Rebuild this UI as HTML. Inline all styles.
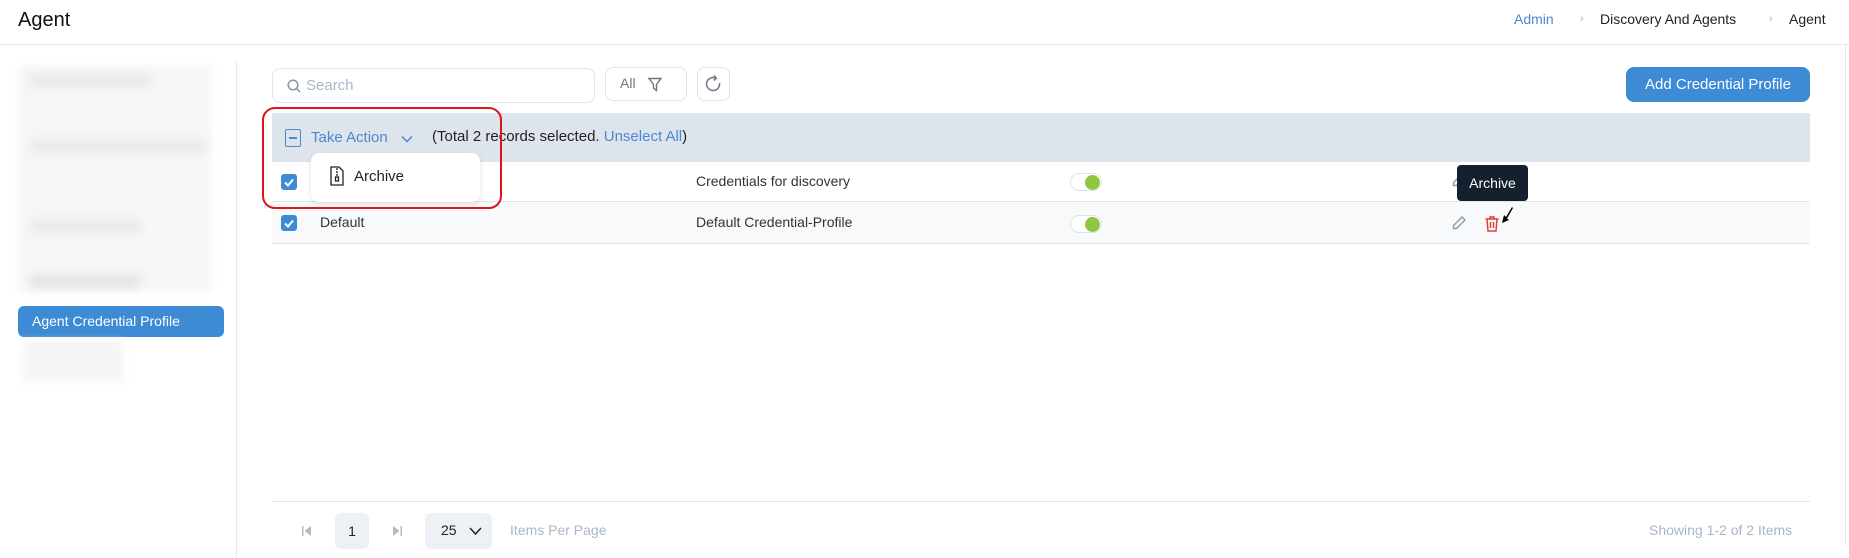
<!DOCTYPE html>
<html><head><meta charset="utf-8"><style>
*{box-sizing:border-box;margin:0;padding:0}
body{width:1849px;height:558px;background:#fff;font-family:"Liberation Sans",sans-serif;position:relative;overflow:hidden;color:#222}
.a{position:absolute}
.t{white-space:nowrap}
</style></head><body>
<div class="a t" style="left:18px;top:9px;font-size:20px;color:#111">Agent</div>
<div class="a t" style="left:1514px;top:11px;font-size:14px;color:#4a88d0">Admin</div>
<div class="a t" style="left:1580px;top:13px;font-size:11px;color:#aaa">›</div>
<div class="a t" style="left:1600px;top:11px;font-size:14px;color:#222">Discovery And Agents</div>
<div class="a t" style="left:1769px;top:13px;font-size:11px;color:#aaa">›</div>
<div class="a t" style="left:1789px;top:11px;font-size:14px;color:#222">Agent</div>
<div class="a" style="left:0;top:44px;width:1849px;height:1px;background:#dfe5ec"></div>

<div class="a" style="left:18px;top:65px;width:194px;height:227px;background:#f6f7f8;filter:blur(3px)"></div>
<div class="a" style="left:30px;top:75px;width:120px;height:12px;background:#e6e7e9;filter:blur(5px)"></div>
<div class="a" style="left:30px;top:140px;width:175px;height:12px;background:#e6e7e9;filter:blur(5px)"></div>
<div class="a" style="left:30px;top:220px;width:110px;height:12px;background:#e6e7e9;filter:blur(5px)"></div>
<div class="a" style="left:30px;top:275px;width:110px;height:12px;background:#e0e1e3;filter:blur(5px)"></div>
<div class="a t" style="left:18px;top:306px;width:206px;height:31px;background:#3d8bd4;border-radius:6px;color:#fff;font-size:14px;padding:7px 0 0 14px">Agent Credential Profile</div>
<div class="a" style="left:23px;top:341px;width:100px;height:40px;background:#f4f5f6;filter:blur(4px)"></div>
<div class="a" style="left:236px;top:62px;width:1px;height:496px;background:#e5e8ec"></div>
<div class="a" style="left:1845px;top:45px;width:1px;height:500px;background:#e5e8ec"></div>

<div class="a" style="left:272px;top:68px;width:323px;height:35px;border:1px solid #dfe4ea;border-radius:8px"></div>
<svg class="a" style="left:287px;top:79px" width="14" height="14" viewBox="0 0 14 14" fill="none" stroke="#8894a2" stroke-width="1.5"><circle cx="6" cy="6" r="4.8"/><path d="M9.5 9.5L13 13"/></svg>
<div class="a t" style="left:306px;top:77px;font-size:15px;color:#a8b6c8">Search</div>
<div class="a" style="left:605px;top:67px;width:82px;height:34px;border:1px solid #dfe4ea;border-radius:8px"></div>
<div class="a t" style="left:620px;top:75px;font-size:14px;color:#6c7684">All</div>
<svg class="a" style="left:648px;top:77px" width="14" height="15" viewBox="0 0 14 15" fill="none" stroke="#6c7684" stroke-width="1.4"><path d="M1 1.5h12L8.5 7.5v6L5.5 11V7.5z"/></svg>
<div class="a" style="left:697px;top:67px;width:33px;height:34px;border:1px solid #dfe4ea;border-radius:8px"></div>
<svg class="a" style="left:704px;top:74px" width="19" height="20" viewBox="0 0 19 20" fill="none" stroke="#6c7684" stroke-width="1.5"><path d="M12 4.2A6.5 6.5 0 1 0 15.5 9"/><path d="M10 1.5l2.3 2.7-2.6 2.2"/></svg>
<div class="a t" style="left:1626px;top:67px;width:184px;height:35px;background:#3d8bd4;border-radius:8px;color:#fff;font-size:15px;text-align:center;line-height:35px">Add Credential Profile</div>

<div class="a" style="left:272px;top:113px;width:1538px;height:49px;background:#dee4ec"></div>
<div class="a" style="left:272px;top:162px;width:1538px;height:40px;background:#fff;border-bottom:1px solid #dfe5ec"></div>
<div class="a" style="left:272px;top:202px;width:1538px;height:42px;background:#f7f9fb;border-bottom:1px solid #dfe5ec"></div>
<div class="a" style="left:285px;top:129px;width:16px;height:18px;border:1.5px solid #4a88d0;border-radius:2px"></div>
<div class="a" style="left:289px;top:137px;width:8px;height:1.5px;background:#4a88d0"></div>
<div class="a t" style="left:311px;top:129px;font-size:15px;color:#4a88d0">Take Action</div>
<svg class="a" style="left:401px;top:135px" width="12" height="8" viewBox="0 0 12 8" fill="none" stroke="#4a88d0" stroke-width="1.5"><path d="M1 1.5l5 5 5-5"/></svg>
<div class="a t" style="left:432px;top:128px;font-size:15px;color:#222">(Total 2 records selected. <span style="color:#4a88d0">Unselect All</span>)</div>

<div class="a" style="left:281px;top:174px;width:16px;height:16px;background:#3d8bd4;border-radius:3px"></div>
<svg class="a" style="left:281px;top:174px" width="16" height="16" viewBox="0 0 16 16" fill="none" stroke="#fff" stroke-width="2"><path d="M4 8.5l3 3 5-6"/></svg>
<div class="a" style="left:281px;top:215px;width:16px;height:16px;background:#3d8bd4;border-radius:3px"></div>
<svg class="a" style="left:281px;top:215px" width="16" height="16" viewBox="0 0 16 16" fill="none" stroke="#fff" stroke-width="2"><path d="M4 8.5l3 3 5-6"/></svg>
<div class="a t" style="left:320px;top:214px;font-size:14px;color:#333">Default</div>
<div class="a t" style="left:696px;top:173px;font-size:14px;color:#333">Credentials for discovery</div>
<div class="a t" style="left:696px;top:214px;font-size:14px;color:#333">Default Credential-Profile</div>
<div class="a" style="left:1070px;top:173px;width:32px;height:18px;border:1px solid #e0e4ea;border-radius:9px;background:#fff"></div>
<div class="a" style="left:1085px;top:175px;width:15px;height:15px;border-radius:50%;background:#8dc63f"></div>
<div class="a" style="left:1070px;top:215px;width:32px;height:18px;border:1px solid #e0e4ea;border-radius:9px;background:#fff"></div>
<div class="a" style="left:1085px;top:217px;width:15px;height:15px;border-radius:50%;background:#8dc63f"></div>

<svg class="a" style="left:1451px;top:172px" width="16" height="16" viewBox="0 0 16 16" fill="none" stroke="#8a98aa" stroke-width="1.4"><path d="M11 2l3 3-8.5 8.5H2.5v-3z"/></svg>
<svg class="a" style="left:1451px;top:215px" width="16" height="16" viewBox="0 0 16 16" fill="none" stroke="#8a98aa" stroke-width="1.4"><path d="M11 2l3 3-8.5 8.5H2.5v-3z"/></svg>
<svg class="a" style="left:1484px;top:215px" width="16" height="17" viewBox="0 0 16 17" fill="none" stroke="#e0403a" stroke-width="1.5"><path d="M1.5 4h13M6 4V2h4v2M3 4l1 12h8l1-12M6.5 7v6M9.5 7v6"/></svg>
<svg class="a" style="left:1500px;top:206px" width="16" height="18" viewBox="0 0 16 18"><path d="M12 1L6 11l-2-2-2 8 7-3-2-1.5L13 2z" fill="#000"/></svg>
<div class="a t" style="left:1457px;top:165px;width:71px;height:36px;background:#15202e;border-radius:4px;color:#fff;font-size:14px;text-align:center;line-height:36px">Archive</div>

<div class="a" style="left:311px;top:153px;width:169px;height:49px;background:#fff;border-radius:8px;box-shadow:0 2px 6px rgba(0,0,0,.12)"></div>
<svg class="a" style="left:330px;top:166px" width="14" height="20" viewBox="0 0 14 20" fill="none" stroke="#222" stroke-width="1.3"><path d="M1 1h8l4 4v14H1z"/><path d="M7 2v2M7 5v2M7 8v2"/><rect x="5.5" y="11" width="3" height="4"/></svg>
<div class="a t" style="left:354px;top:168px;font-size:15px;color:#222">Archive</div>
<div class="a" style="left:262px;top:107px;width:240px;height:102px;border:2.5px solid #e0121b;border-radius:13px"></div>

<div class="a" style="left:272px;top:501px;width:1538px;height:1px;background:#dfe5ec"></div>
<svg class="a" style="left:301px;top:525px" width="12" height="12" viewBox="0 0 12 12" fill="#b0bccb"><rect x="1" y="1" width="1.5" height="10"/><path d="M10 1v10L3.5 6z"/></svg>
<div class="a t" style="left:335px;top:513px;width:34px;height:36px;background:#edf0f5;border-radius:6px;text-align:center;line-height:36px;font-size:14px;color:#222">1</div>
<svg class="a" style="left:391px;top:525px" width="12" height="12" viewBox="0 0 12 12" fill="#b0bccb"><rect x="9.5" y="1" width="1.5" height="10"/><path d="M2 1v10L8.5 6z"/></svg>
<div class="a" style="left:425px;top:513px;width:67px;height:36px;background:#edf0f5;border-radius:6px"></div>
<div class="a t" style="left:441px;top:522px;font-size:14px;color:#222">25</div>
<svg class="a" style="left:469px;top:527px" width="13" height="8" viewBox="0 0 13 8" fill="none" stroke="#222" stroke-width="1.5"><path d="M1 1l5.5 6L12 1"/></svg>
<div class="a t" style="left:510px;top:522px;font-size:14px;color:#a8b6c8">Items Per Page</div>
<div class="a t" style="left:1649px;top:522px;font-size:14px;color:#a8b6c8">Showing 1-2 of 2 Items</div>
</body></html>
